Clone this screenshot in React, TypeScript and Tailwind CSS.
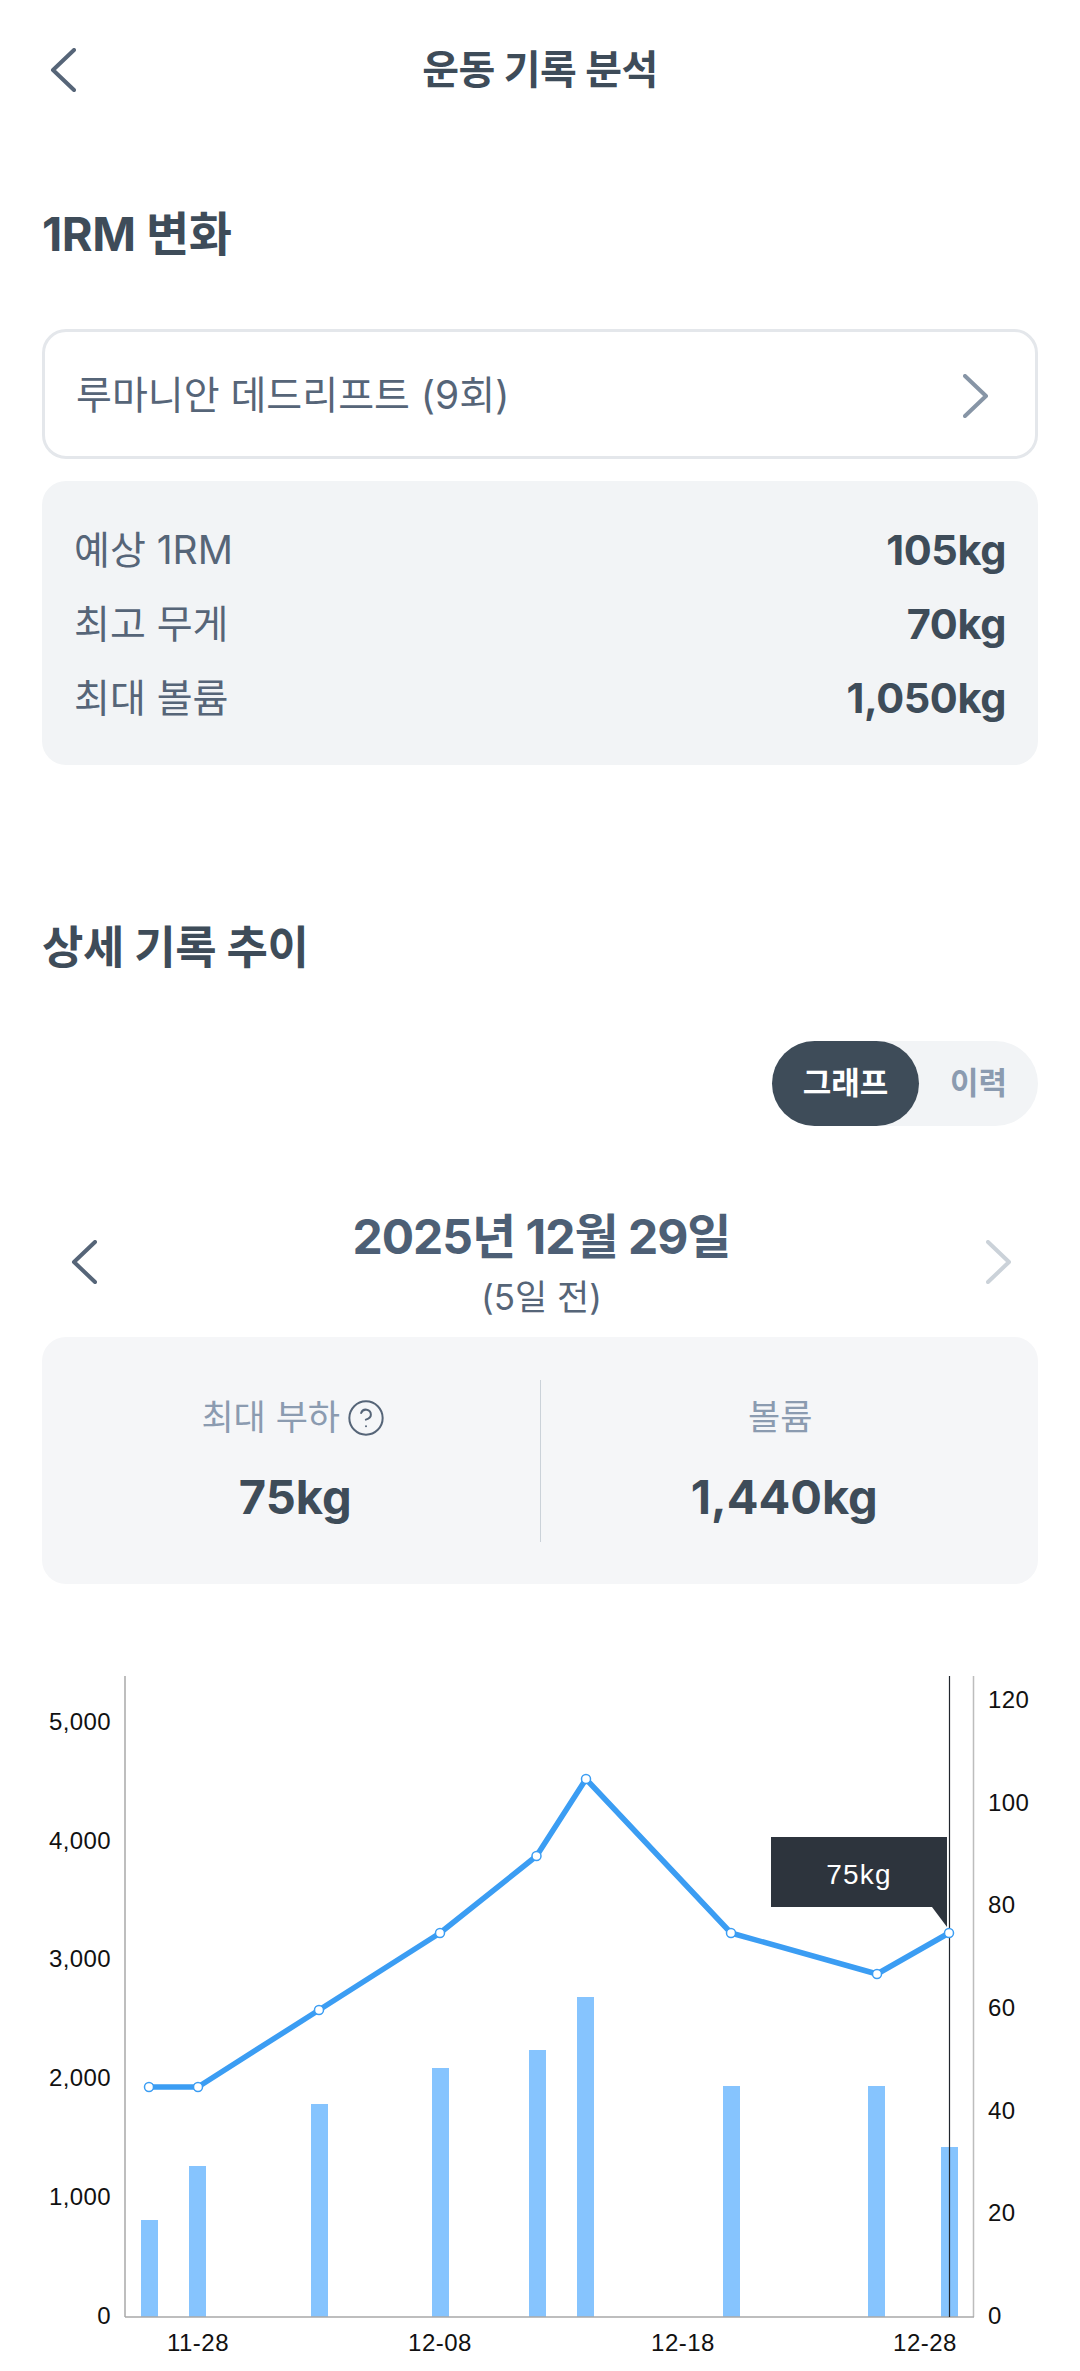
import { CircleHelp } from "lucide-react";

const font = "font-['Inter','Noto_Sans_CJK_KR',sans-serif]";

function Chevron({ dir, color, className = "" }: { dir: "left" | "right"; color: string; className?: string }) {
  const pts = dir === "left" ? "24,2 3,22 24,42" : "2,2 23,22 2,42";
  return (
    <svg width="26" height="44" viewBox="0 0 26 44" className={`shrink-0 ${className}`} fill="none">
      <polyline points={pts} stroke={color} strokeWidth="4" strokeLinecap="round" strokeLinejoin="round" />
    </svg>
  );
}

const points: [number, number][] = [
  [149, 2087], [198, 2087], [319, 2010], [440, 1933], [536.5, 1856], [586, 1779], [731, 1933], [877, 1974], [949, 1933],
];
const bars: [number, number][] = [
  [141, 2220], [189, 2166], [311, 2104], [432, 2068], [529, 2050], [577, 1997], [723, 2086], [868, 2086], [941, 2147],
];
const leftLabels: [string, number][] = [
  ["5,000", 1721], ["4,000", 1840], ["3,000", 1958], ["2,000", 2077], ["1,000", 2196], ["0", 2315],
];
const rightLabels: [string, number][] = [
  ["120", 1699], ["100", 1802], ["80", 1904], ["60", 2007], ["40", 2110], ["20", 2212], ["0", 2315],
];
const xLabels: [string, number][] = [
  ["11-28", 198], ["12-08", 440], ["12-18", 683], ["12-28", 925],
];

function Chart() {
  const y0 = 1660;
  const chartFont = { fontFamily: "'Liberation Sans', sans-serif" };
  return (
    <svg width="1080" height="711" viewBox={`0 ${y0} 1080 711`} className="mt-[76px] block" style={chartFont}>
      {bars.map(([x, top]) => (
        <rect key={x} x={x} y={top} width="17" height={2317 - top} fill="#86c4fe" />
      ))}
      <line x1="125" y1="1676" x2="125" y2="2317" stroke="#a9a9a9" strokeWidth="1.5" />
      <line x1="973.5" y1="1676" x2="973.5" y2="2317" stroke="#bdbdbd" strokeWidth="1.5" />
      <line x1="125" y1="2317" x2="974" y2="2317" stroke="#a9a9a9" strokeWidth="1.5" />
      <line x1="949.5" y1="1676" x2="949.5" y2="2317" stroke="#22272e" strokeWidth="1.2" />
      <polyline points={points.map((p) => p.join(",")).join(" ")} fill="none" stroke="#3b9df3" strokeWidth="5.5" strokeLinejoin="round" />
      <path d="M771 1837 H947 V1927 L932 1907 H771 Z" fill="#2d343d" />
      <text x="859" y="1883.5" textAnchor="middle" fontSize="28" letterSpacing="1.2" fill="#ffffff">75kg</text>
      {points.map(([x, y]) => (
        <circle key={x} cx={x} cy={y} r="4.5" fill="#ffffff" stroke="#3b9df3" strokeWidth="1.5" />
      ))}
      {leftLabels.map(([t, y]) => (
        <text key={t} x="111" y={y + 8.5} textAnchor="end" fontSize="24" letterSpacing="0.4" fill="#111111">{t}</text>
      ))}
      {rightLabels.map(([t, y]) => (
        <text key={t + y} x="988" y={y + 8.5} fontSize="24" letterSpacing="0.4" fill="#111111">{t}</text>
      ))}
      {xLabels.map(([t, x]) => (
        <text key={t} x={x} y="2350.5" textAnchor="middle" fontSize="24" letterSpacing="0.5" fill="#111111">{t}</text>
      ))}
    </svg>
  );
}

function StatRow({ label, value }: { label: string; value: string }) {
  return (
    <div className="flex h-[74px] items-center justify-between">
      <span className="text-[39px] text-[#566578]">{label}</span>
      <span className="text-[41.5px] font-bold tracking-[-0.4px] text-[#3e4c59]">{value}</span>
    </div>
  );
}

export default function App() {
  return (
    <div className={`${font} min-h-[2371px] w-[1080px] overflow-hidden bg-white`}>
      <header className="mt-[40px] flex h-[60px] items-center justify-between px-[50px]">
        <Chevron dir="left" color="#566578" />
        <h1 className="text-[40px] font-bold tracking-[-0.5px] text-[#3e4c59]">운동 기록 분석</h1>
        <div className="w-[26px]" />
      </header>

      <section className="px-[42px]">
        <h2 className="mt-[104px] flex h-[60px] items-center text-[47px] font-bold tracking-[-0.5px] text-[#3e4c59]">1RM 변화</h2>
        <div className="mt-[65px] flex h-[130px] items-center justify-between rounded-[24px] border-[3px] border-[#e4e7eb] pl-[31px] pr-[46px] pt-[3px]">
          <span className="text-[39px] text-[#566578]">루마니안 데드리프트 (9회)</span>
          <Chevron dir="right" color="#8795a6" />
        </div>
        <div className="mt-[22px] h-[284px] rounded-[24px] bg-[#f2f4f6] px-[32px] pt-[32px]">
          <StatRow label="예상 1RM" value="105kg" />
          <StatRow label="최고 무게" value="70kg" />
          <StatRow label="최대 볼륨" value="1,050kg" />
        </div>

        <h2 className="mt-[150px] flex h-[60px] items-center pt-[6px] text-[45px] font-bold tracking-[-0.4px] text-[#3e4c59]">상세 기록 추이</h2>
        <div className="mt-[66px] flex justify-end">
          <div className="flex h-[85px] w-[266px] items-center rounded-full bg-[#f2f4f6]">
            <div className="flex h-full w-[147px] items-center justify-center rounded-full bg-[#3e4c59] text-[31px] font-bold text-white">그래프</div>
            <div className="flex h-full flex-1 items-center justify-center text-[31px] font-bold text-[#8b9bb0]">이력</div>
          </div>
        </div>

        <div className="mt-[81px] flex items-center justify-between pl-[29px] pr-[26px]">
          <Chevron dir="left" color="#566578" className="mb-[5px]" />
          <div className="flex flex-col items-center">
            <div className="flex h-[60px] items-center text-[48px] font-bold tracking-[-1px] text-[#4d5f75]">2025년 12월 29일</div>
            <div className="mt-[5px] flex h-[50px] items-center text-[35px] text-[#566578]">(5일 전)</div>
          </div>
          <Chevron dir="right" color="#cbd2d9" className="mb-[5px]" />
        </div>

        <div className="mt-[15px] flex h-[247px] items-center rounded-[24px] bg-[#f5f6f8] pb-[6px]">
          <div className="flex flex-1 flex-col items-center">
            <div className="flex h-[60px] items-center gap-[6px] pl-[6px] text-[35px] text-[#8b9bb0]">
              최대 부하
              <CircleHelp size={40} strokeWidth={1.2} color="#566578" />
            </div>
            <div className="mt-[20px] flex h-[60px] items-center pl-[9px] text-[47px] font-bold text-[#3e4c59]">75kg</div>
          </div>
          <div className="mt-[6px] h-[162px] w-px bg-[#cbd2d9]" />
          <div className="flex flex-1 flex-col items-center">
            <div className="flex h-[60px] items-center pr-[18px] text-[35px] text-[#8b9bb0]">볼륨</div>
            <div className="mt-[20px] flex h-[60px] items-center pr-[10px] text-[47px] font-bold text-[#3e4c59]">1,440kg</div>
          </div>
        </div>
      </section>

      <Chart />
    </div>
  );
}
